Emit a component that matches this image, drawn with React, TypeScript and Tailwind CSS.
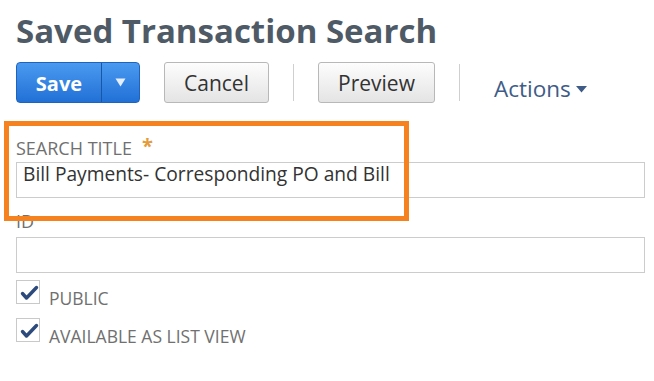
import React from 'react';

const font = { fontFamily: '"Open Sans", "Liberation Sans", sans-serif' };

type CheckRowProps = {
  label: string;
  className?: string;
};

const CheckRow: React.FC<CheckRowProps> = ({ label, className }) => (
  <div className={`flex items-start ${className ?? ''}`}>
    <div className="w-[24px] h-[24px] border border-[#c9c9c9] bg-white flex items-center justify-center shrink-0">
      <svg width="22" height="22" viewBox="0 0 22 22">
        <path d="M5.5 12.5 L9.5 17 L19.5 6.5" fill="none" stroke="#2c4a7c" strokeWidth="3.4" strokeLinecap="round" strokeLinejoin="round" />
      </svg>
    </div>
    <div className="ml-[9px] mt-[6px] text-[17.5px] leading-[24px] text-[#707070]">{label}</div>
  </div>
);

const GrayButton: React.FC<{ label: string; width: string }> = ({ label, width }) => (
  <button
    className={`${width} h-[41px] rounded-[3px] border border-[#b8b8b8] bg-gradient-to-b from-[#fdfdfd] to-[#e4e4e4] text-[21px] text-[#333] flex items-center justify-center pt-[2px]`}
  >
    {label}
  </button>
);

const Separator = () => <div className="w-px h-[37px] bg-[#cfcfcf]"></div>;

export default function App() {
  return (
    <div className="relative w-[654px] h-[381px] bg-white overflow-hidden pl-4 pr-[9px]" style={font}>
      {/* Header */}
      <div className="pt-[11px] h-[51px] text-[33px] leading-[40px] font-bold text-[#4e5a66]">
        Saved Transaction Search
      </div>

      {/* Toolbar */}
      <div className="mt-[11px] h-[41px] flex items-center">
        <div className="w-[124px] h-[41px] rounded-[4px] border border-[#1f63bd] bg-gradient-to-b from-[#4a9af0] to-[#2170d6] flex">
          <div className="w-[84px] flex items-center justify-center pt-[2px] text-[20px] font-bold text-white">Save</div>
          <div className="w-px bg-[#1b56a6]"></div>
          <div className="flex-1 flex items-center justify-center">
            <svg width="11" height="9" viewBox="0 0 11 9">
              <path d="M0.5 0.5 L10.5 0.5 L5.5 8.5 Z" fill="#e6efff" />
            </svg>
          </div>
        </div>
        <div className="ml-[24px]">
          <GrayButton label="Cancel" width="w-[105px]" />
        </div>
        <div className="mx-[24px]">
          <Separator />
        </div>
        <GrayButton label="Preview" width="w-[117px]" />
        <div className="ml-[24px]">
          <Separator />
        </div>
        <div className="ml-[34px] self-start mt-[12px] h-[30px] flex items-center text-[22.5px] leading-[30px] text-[#3e5c87]">
          Actions
          <svg className="ml-[5px]" width="11" height="7" viewBox="0 0 11 7">
            <path d="M0 0 L11 0 L5.5 6.5 Z" fill="#3e5c87" />
          </svg>
        </div>
      </div>

      {/* Search title */}
      <div className="mt-[35px] h-[20px] text-[18px] leading-[20px] text-[#707070] flex">
        SEARCH TITLE
        <span className="ml-[10px] -mt-[2px] text-[#e39b3d] text-[20px] leading-[20px] font-bold">*</span>
      </div>
      <div className="mt-[4px] h-[36px] border border-[#cccccc] bg-white pl-[6px] pt-[1px] text-[19.2px] leading-[20px] text-[#333]">
        Bill Payments- Corresponding PO and Bill
      </div>

      {/* ID */}
      <div className="mt-[13px] text-[18px] leading-[20px] text-[#707070]">ID</div>
      <div className="mt-[6px] h-[36px] border border-[#cccccc] bg-white"></div>

      {/* Checkboxes */}
      <CheckRow label="PUBLIC" className="mt-[7px]" />
      <CheckRow label="AVAILABLE AS LIST VIEW" className="mt-[8px]" />

      {/* Highlight annotation */}
      <div className="absolute left-[4px] top-[121px] w-[405px] h-[100px] border-[5px] border-[#f5821f] pointer-events-none"></div>
    </div>
  );
}
